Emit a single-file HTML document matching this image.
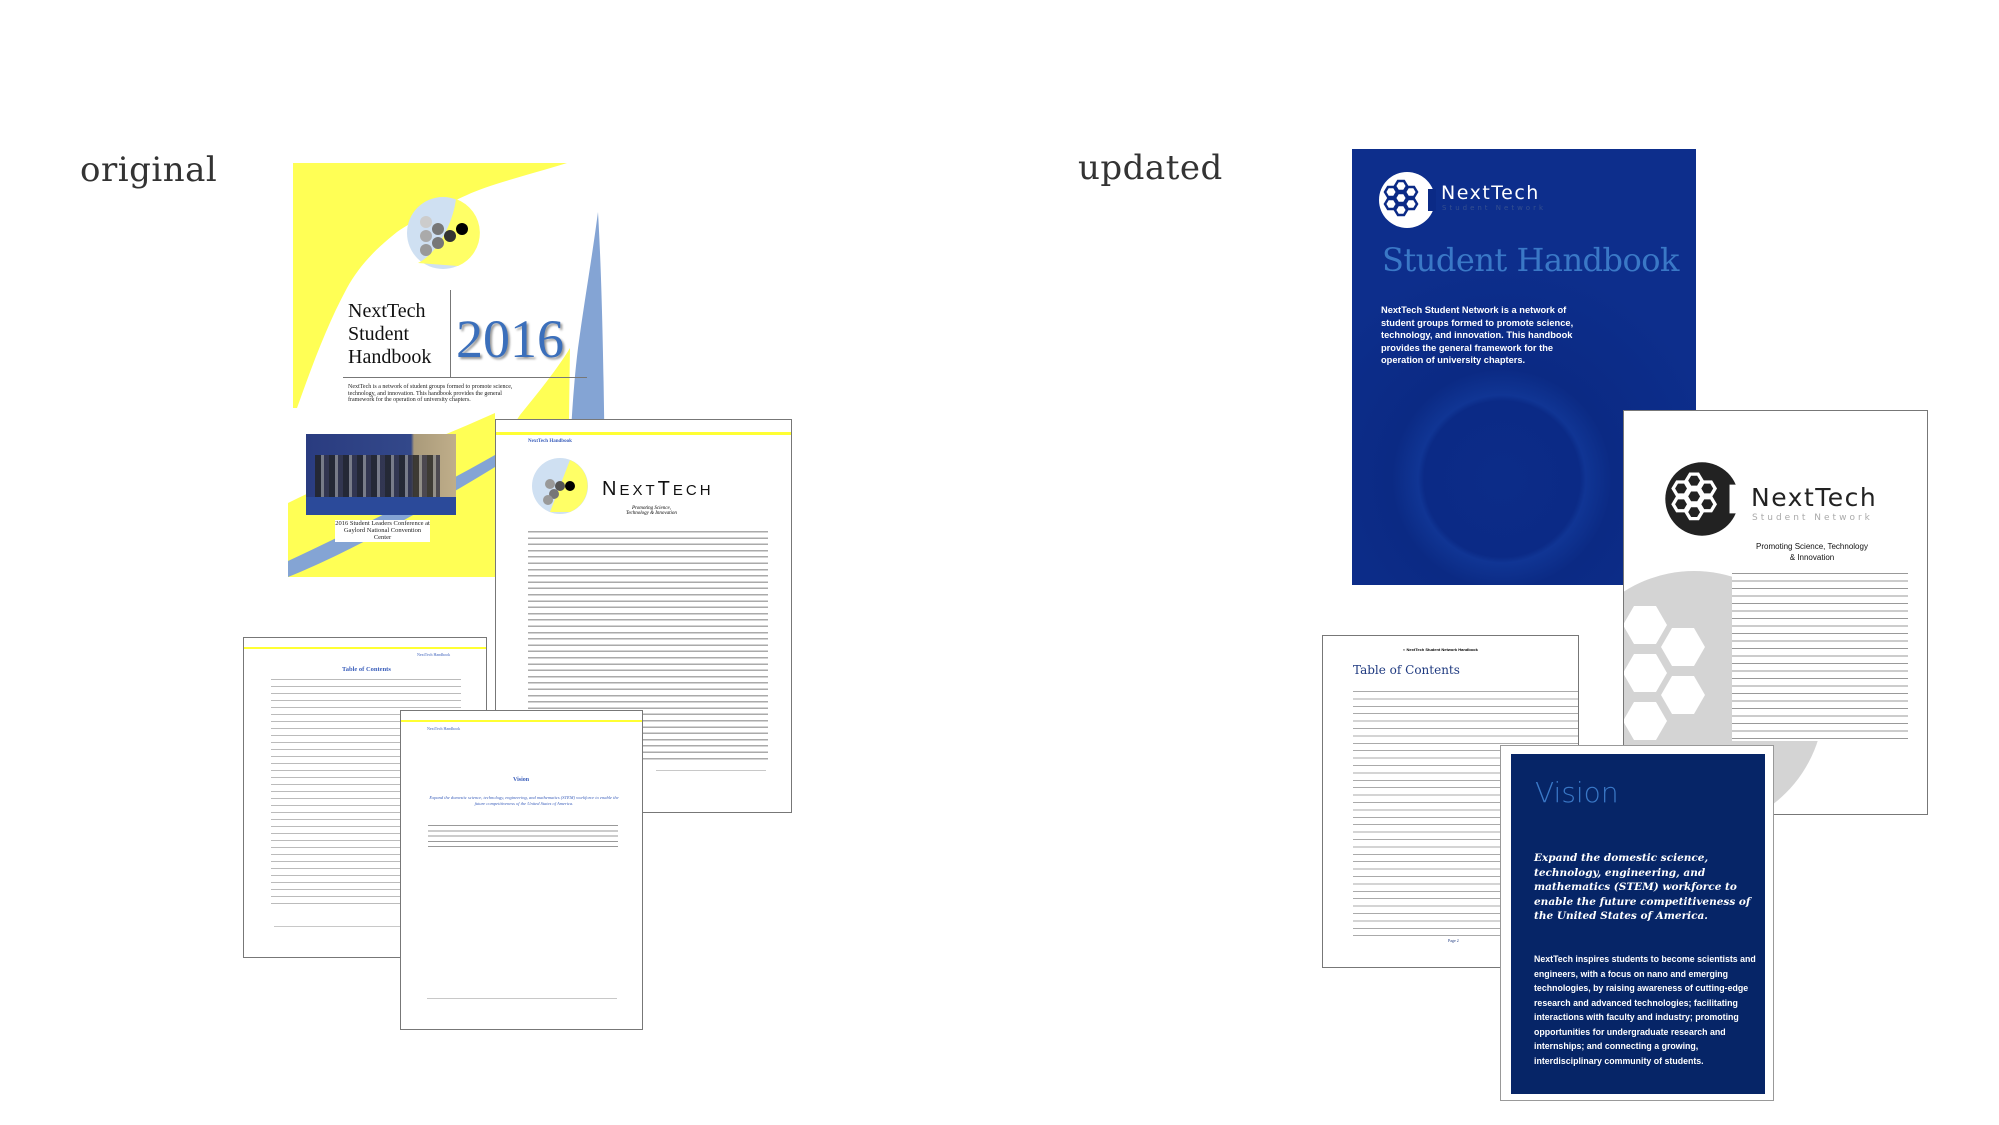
<!DOCTYPE html>
<html><head><meta charset="utf-8"><style>
*{margin:0;padding:0;box-sizing:border-box}
body{width:1999px;height:1125px;background:#fff;position:relative;overflow:hidden;font-family:"Liberation Serif",serif}
.a{position:absolute}
.pg{position:absolute;background:#fff;border:1px solid #777;overflow:hidden}
.ln{position:absolute;height:2px;background:#c8c8c8}
.tx{font-size:5px;line-height:6px;color:#222}
</style></head><body>

<div class="a" style="left:80px;top:150px;font-size:34px;color:#333;font-family:'DejaVu Serif','Liberation Serif',serif;font-weight:200;letter-spacing:0.5px">original</div>
<div class="a" style="left:1078px;top:148px;font-size:34px;color:#333;font-family:'DejaVu Serif','Liberation Serif',serif;font-weight:200;letter-spacing:0.5px">updated</div>

<!-- Original cover -->
<svg class="a" style="left:288px;top:163px" width="322" height="414" viewBox="0 0 322 414">
<path d="M5 0 L279 0 C240 12 200 22 179 32 C150 45 125 58 109 69 C85 88 70 105 59 125 C40 160 25 200 9 245 L5 245Z" fill="#ffff55"/>
<path d="M310 49 C314 120 316 200 318 414 L279 414 C280 330 282 250 290 185 C296 140 304 95 310 49Z" fill="#84a4d4"/>
<path d="M282 185 C270 205 250 230 232 252 L207 290 L207 414 L279 414 C280 330 281 250 282 185Z" fill="#ffff55"/>
<path d="M0 340 C60 310 140 280 207 250 L207 414 L0 414Z" fill="#ffff55"/>
<path d="M0 398 C60 370 140 330 207 292 L207 304 C140 345 60 390 0 414Z" fill="#84a4d4"/>
<circle cx="155" cy="70" r="36" fill="#cfe0f2"/>
<path d="M168 36 A36 36 0 0 1 170 103 L130 100 C150 90 165 60 168 36Z" fill="#ffff66"/>
<g><circle cx="150" cy="66" r="6" fill="#777"/><circle cx="162" cy="73" r="6" fill="#333"/><circle cx="174" cy="66" r="6" fill="#000"/><circle cx="150" cy="80" r="6" fill="#777"/><circle cx="138" cy="73" r="6" fill="#aaa"/><circle cx="138" cy="87" r="6" fill="#999"/><circle cx="138" cy="59" r="6" fill="#ccc"/></g>
</svg>
<div class="a" style="left:348px;top:300px;font-size:20px;line-height:23px;color:#111">NextTech<br>Student<br>Handbook</div>
<div class="a" style="left:450px;top:290px;width:1px;height:87px;background:#777"></div>
<div class="a" style="left:343px;top:377px;width:244px;height:1px;background:#777"></div>
<div class="a" style="left:456px;top:308px;font-size:54px;color:#3b6fbb;text-shadow:2px 2px 2px #999">2016</div>
<div class="a tx" style="left:348px;top:384px;width:170px;font-size:6px;line-height:6.5px">NextTech is a network of student groups formed to promote science, technology, and innovation. This handbook provides the general framework for the operation of university chapters.</div>
<div class="a" style="left:306px;top:434px;width:150px;height:81px;background:linear-gradient(90deg,#2a3c80 0,#33488a 70%,#a99a7a 72%,#c0ae8a 100%)"></div>
<div class="a" style="left:315px;top:455px;width:125px;height:45px;background:repeating-linear-gradient(90deg,#222 0 6px,#8a8a8a 6px 9px,#334 9px 14px);opacity:.8"></div>
<div class="a" style="left:306px;top:497px;width:150px;height:18px;background:#2b4a9a"></div>
<div class="a tx" style="left:335px;top:520px;width:95px;height:22px;background:#fff;text-align:center;font-size:6.5px;line-height:7px">2016 Student Leaders Conference at Gaylord National Convention Center</div>

<!-- Original page 2 -->
<div class="pg" style="left:495px;top:419px;width:297px;height:394px">
<div class="a" style="left:0;top:12px;width:297px;height:3px;background:#ffff33"></div>
<div class="a" style="left:32px;top:19px;font-size:5px;color:#3b5fbb;font-weight:bold">NextTech Handbook</div>
<svg class="a" style="left:34px;top:36px" width="60" height="60"><circle cx="30" cy="30" r="28" fill="#cfe0f2"/><path d="M40 4 A28 28 0 0 1 40 56 L20 56Z" fill="#ffff66"/><g><circle cx="30" cy="30" r="5" fill="#555"/><circle cx="40" cy="30" r="5" fill="#000"/><circle cx="24" cy="38" r="5" fill="#777"/><circle cx="20" cy="28" r="5" fill="#999"/><circle cx="18" cy="44" r="5" fill="#999"/></g></svg>
<div class="a" style="left:106px;top:58px;font-size:20px;font-family:'Liberation Sans',sans-serif;letter-spacing:3px;color:#111">N<span style="font-size:15px">EXT</span>T<span style="font-size:15px">ECH</span></div>
<div class="a" style="left:130px;top:86px;font-size:5px;font-style:italic;text-align:center">Promoting Science,<br>Technology &amp; Innovation</div>
<div class="a" style="left:32px;top:110px;width:240px;height:230px;background:repeating-linear-gradient(#fff 0 1px,#aaa 1px 2.5px,#fff 2.5px 6.3px)"></div>
<div class="ln" style="left:160px;top:350px;width:110px;height:1px"></div>
</div>

<!-- Original TOC -->
<div class="pg" style="left:243px;top:637px;width:244px;height:321px">
<div class="a" style="left:0;top:9px;width:244px;height:2px;background:#ffff33"></div>
<div class="a" style="left:173px;top:14px;font-size:4px;color:#3b5fbb">NextTech Handbook</div>
<div class="a" style="left:98px;top:28px;font-size:6.5px;color:#3b5fbb;font-weight:bold">Table of Contents</div>
<div class="a" style="left:27px;top:38px;width:190px;height:232px;background:repeating-linear-gradient(#fff 0 3px,#bbb 3px 4px,#fff 4px 7px)"></div>
<div class="ln" style="left:30px;top:288px;width:180px;height:1px"></div>
</div>

<!-- Original Vision -->
<div class="pg" style="left:400px;top:710px;width:243px;height:320px">
<div class="a" style="left:0;top:9px;width:243px;height:2px;background:#ffff33"></div>
<div class="a" style="left:26px;top:15px;font-size:4px;color:#3b5fbb">NextTech Handbook</div>
<div class="a" style="left:112px;top:66px;font-size:6px;color:#3b5fbb;font-weight:bold">Vision</div>
<div class="a" style="left:28px;top:84px;width:190px;font-size:4.5px;color:#3b5fbb;font-style:italic;text-align:center;line-height:6px">Expand the domestic science, technology, engineering, and mathematics (STEM) workforce to enable the future competitiveness of the United States of America.</div>
<div class="a" style="left:27px;top:113px;width:190px;height:24px;background:repeating-linear-gradient(#fff 0 1px,#999 1px 2px,#fff 2px 5.3px)"></div>
<div class="ln" style="left:26px;top:287px;width:190px;height:1px"></div>
</div>

<!-- Updated blue cover -->
<div class="a" style="left:1352px;top:149px;width:344px;height:436px;background:radial-gradient(circle at 150px 330px,#0c2c88 0,#0b2a86 78px,#103594 84px,#0b2a84 110px,#0d2e8c 220px),linear-gradient(#0a2a8a,#0a2a80);overflow:hidden">
<svg class="a" style="left:26px;top:22px" width="58" height="58" viewBox="0 0 58 58"><circle cx="29" cy="29" r="28" fill="#fff"/><path d="M50 18 L58 18 L58 40 L50 40Z" fill="#0b2a86"/><g fill="none" stroke="#0b2a86" stroke-width="2.5"><path d="M20 10 l6 0 3 5 -3 5 -6 0 -3 -5z"/><path d="M30 16 l6 0 3 5 -3 5 -6 0 -3 -5z"/><path d="M20 22 l6 0 3 5 -3 5 -6 0 -3 -5z"/><path d="M10 16 l6 0 3 5 -3 5 -6 0 -3 -5z"/><path d="M10 28 l6 0 3 5 -3 5 -6 0 -3 -5z"/><path d="M30 28 l6 0 3 5 -3 5 -6 0 -3 -5z"/><path d="M20 34 l6 0 3 5 -3 5 -6 0 -3 -5z"/></g></svg>
<div class="a" style="left:89px;top:33px;font-size:19px;color:#fff;font-family:'DejaVu Sans',sans-serif;letter-spacing:1.5px">NextTech</div>
<div class="a" style="left:90px;top:55px;font-size:7px;color:#35508f;font-family:'DejaVu Sans',sans-serif;letter-spacing:3px">Student Network</div>
<div class="a" style="left:30px;top:92px;font-size:32px;color:#3a78c6;font-family:'DejaVu Serif','Liberation Serif',serif;white-space:nowrap;letter-spacing:-0.5px">Student Handbook</div>
<div class="a" style="left:29px;top:155px;width:215px;font-size:9.3px;line-height:12.5px;color:#fff;font-weight:bold;font-family:'Liberation Sans',sans-serif">NextTech Student Network is a network of<br>student groups formed to promote science,<br>technology, and innovation.  This handbook<br>provides the general framework for the<br>operation of university chapters.</div>
</div>

<!-- Updated NextTech page -->
<div class="pg" style="left:1623px;top:410px;width:305px;height:405px">
<div class="a" style="left:-60px;top:160px;width:260px;height:260px;border-radius:50%;background:#d4d4d4"></div>
<svg class="a" style="left:0;top:185px" width="110" height="222"><g fill="#fff"><path d="M10 10 l22 0 11 19 -11 19 -22 0 -11 -19z"/><path d="M48 32 l22 0 11 19 -11 19 -22 0 -11 -19z"/><path d="M10 58 l22 0 11 19 -11 19 -22 0 -11 -19z"/><path d="M48 80 l22 0 11 19 -11 19 -22 0 -11 -19z"/><path d="M10 106 l22 0 11 19 -11 19 -22 0 -11 -19z"/></g></svg>
<svg class="a" style="left:40px;top:50px" width="76" height="76" viewBox="0 0 58 58"><circle cx="29" cy="29" r="28" fill="#222"/><path d="M50 18 L58 18 L58 40 L50 40Z" fill="#fff"/><g fill="none" stroke="#fff" stroke-width="2.5"><path d="M20 10 l6 0 3 5 -3 5 -6 0 -3 -5z"/><path d="M30 16 l6 0 3 5 -3 5 -6 0 -3 -5z"/><path d="M20 22 l6 0 3 5 -3 5 -6 0 -3 -5z"/><path d="M10 16 l6 0 3 5 -3 5 -6 0 -3 -5z"/><path d="M10 28 l6 0 3 5 -3 5 -6 0 -3 -5z"/><path d="M30 28 l6 0 3 5 -3 5 -6 0 -3 -5z"/><path d="M20 34 l6 0 3 5 -3 5 -6 0 -3 -5z"/></g></svg>
<div class="a" style="left:127px;top:72px;font-size:25px;color:#222;font-family:'DejaVu Sans',sans-serif;letter-spacing:1.5px">NextTech</div>
<div class="a" style="left:128px;top:102px;font-size:9px;color:#aaa;font-family:'DejaVu Sans',sans-serif;letter-spacing:3px">Student Network</div>
<div class="a" style="left:118px;top:130px;width:140px;font-size:8px;line-height:11px;text-align:center;font-family:'Liberation Sans',sans-serif;color:#111">Promoting Science, Technology<br>&amp; Innovation</div>
<div class="a" style="left:108px;top:160px;width:176px;height:170px;background:repeating-linear-gradient(#fff 0 2px,#999 2px 3px,#fff 3px 7.5px)"></div>
</div>

<!-- Updated TOC -->
<div class="pg" style="left:1322px;top:635px;width:257px;height:333px">
<div class="a" style="left:80px;top:11px;font-size:4px;font-weight:bold;font-family:'Liberation Sans',sans-serif">◐ NextTech Student Network Handbook</div>
<div class="a" style="left:30px;top:27px;font-size:12px;color:#1f3a80;font-family:'DejaVu Serif',serif">Table of Contents</div>
<div class="a" style="left:30px;top:51px;width:240px;height:250px;background:repeating-linear-gradient(#fff 0 4px,#aaa 4px 5px,#fff 5px 7.4px)"></div>
<div class="a" style="left:125px;top:302px;font-size:4px;color:#1f3a80">Page 2</div>
</div>

<!-- Updated Vision -->
<div class="pg" style="left:1500px;top:745px;width:274px;height:356px;border-color:#999">
<div class="a" style="left:10px;top:8px;width:254px;height:340px;background:#062567"></div>
<div class="a" style="left:34px;top:30px;font-size:28px;color:#3a78c6;font-family:'DejaVu Sans',sans-serif;font-weight:300">Vision</div>
<div class="a" style="left:33px;top:105px;width:225px;font-size:10.5px;line-height:14.5px;color:#fff;font-style:italic;font-weight:bold;font-family:'DejaVu Serif',serif">Expand the domestic science, technology, engineering, and mathematics (STEM) workforce to enable the future competitiveness of the United States of America.</div>
<div class="a" style="left:33px;top:206px;width:228px;font-size:8.8px;line-height:14.5px;color:#fff;font-weight:bold;font-family:'Liberation Sans',sans-serif">NextTech inspires students to become scientists and engineers, with a focus on nano and emerging technologies, by raising awareness of cutting-edge research and advanced technologies; facilitating interactions with faculty and industry; promoting opportunities for undergraduate research and internships; and connecting a growing, interdisciplinary community of students.</div>
</div>

</body></html>
